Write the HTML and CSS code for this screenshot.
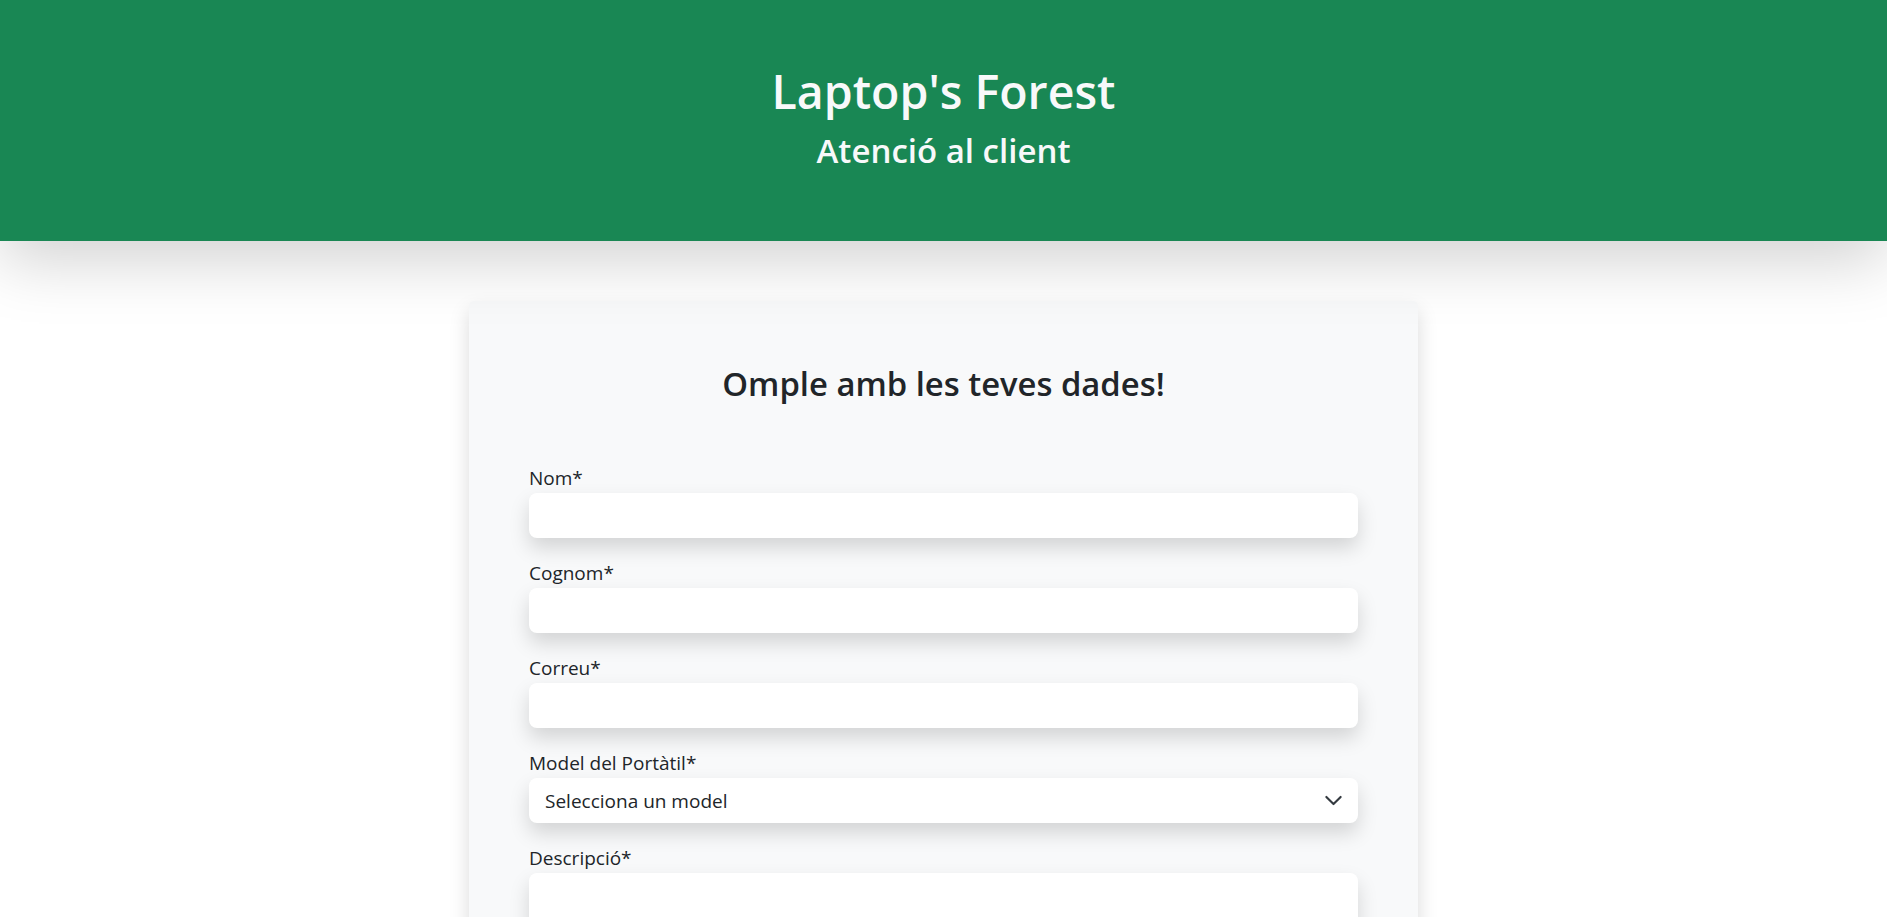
FILE: index.html
```html
<!DOCTYPE html>
<html lang="ca">
<head>
<meta charset="utf-8">
<title>Laptop's Forest - Atenció al client</title>
<link rel="stylesheet" href="styles.css">
</head>
<body>
<header class="hero">
  <h1 class="hero-title">Laptop's Forest</h1>
  <h2 class="hero-sub">Atenció al client</h2>
</header>
<main class="main">
  <form class="card">
    <h2 class="card-title">Omple amb les teves dades!</h2>
    <div class="field">
      <label class="label" for="nom">Nom*</label>
      <input class="control" id="nom" type="text">
    </div>
    <div class="field">
      <label class="label" for="cognom">Cognom*</label>
      <input class="control" id="cognom" type="text">
    </div>
    <div class="field">
      <label class="label" for="correu">Correu*</label>
      <input class="control" id="correu" type="email">
    </div>
    <div class="field">
      <label class="label" for="model">Model del Portàtil*</label>
      <div class="select-wrap">
        <select class="control select" id="model">
          <option>Selecciona un model</option>
        </select>
        <svg class="chevron" viewBox="0 0 16 16" width="19" height="19" aria-hidden="true"><path d="m2 5 6 6 6-6" fill="none" stroke="#343a40" stroke-width="1.8" stroke-linecap="round" stroke-linejoin="round"/></svg>
      </div>
    </div>
    <div class="field">
      <label class="label" for="desc">Descripció*</label>
      <textarea class="control textarea" id="desc"></textarea>
    </div>
  </form>
</main>
</body>
</html>
```
FILE: styles.css
```css
* { box-sizing: border-box; }
html, body { margin: 0; padding: 0; }
body {
  font-family: "Open Sans", "Noto Sans", "Liberation Sans", sans-serif;
  color: #212529;
  background: #fff;
}
.hero {
  height: 241px;
  background: #198754;
  color: #f8f9fa;
  display: flex;
  flex-direction: column;
  align-items: center;
  padding-top: 63px;
  box-shadow: 0 20px 60px rgba(0, 0, 0, 0.175);
  position: relative;
  z-index: 1;
}
.hero-title {
  margin: 0;
  font-size: 46.5px;
  font-weight: 600;
  line-height: 56px;
}
.hero-sub {
  margin: 12px 0 0;
  font-size: 33px;
  font-weight: 600;
  line-height: 40px;
}
.main {
  padding: 60px 0 40px;
}
.card {
  width: 949px;
  margin: 0 auto;
  background: #f8f9fa;
  border-radius: 5px;
  box-shadow: 0 10px 20px rgba(0, 0, 0, 0.15);
  padding: 59px 60px 60px;
}
.card-title {
  margin: 0 0 55px;
  text-align: center;
  font-size: 32.8px;
  font-weight: 600;
  line-height: 48px;
}
.field {
  display: flex;
  flex-direction: column;
  margin-bottom: 20px;
}
.label {
  font-size: 19px;
  line-height: 30px;
}
.control {
  display: block;
  width: 100%;
  height: 45px;
  border: none;
  border-radius: 8px;
  background: #fff;
  box-shadow: 0 10px 20px rgba(0, 0, 0, 0.15);
  font-family: inherit;
  font-size: 19px;
  color: #212529;
  padding: 0 16px;
  outline: none;
}
.select-wrap {
  position: relative;
}
.select {
  appearance: none;
  -webkit-appearance: none;
}
.chevron {
  position: absolute;
  right: 15px;
  top: 13px;
  pointer-events: none;
}
.textarea {
  height: 150px;
  resize: none;
  padding-top: 8px;
}
```
